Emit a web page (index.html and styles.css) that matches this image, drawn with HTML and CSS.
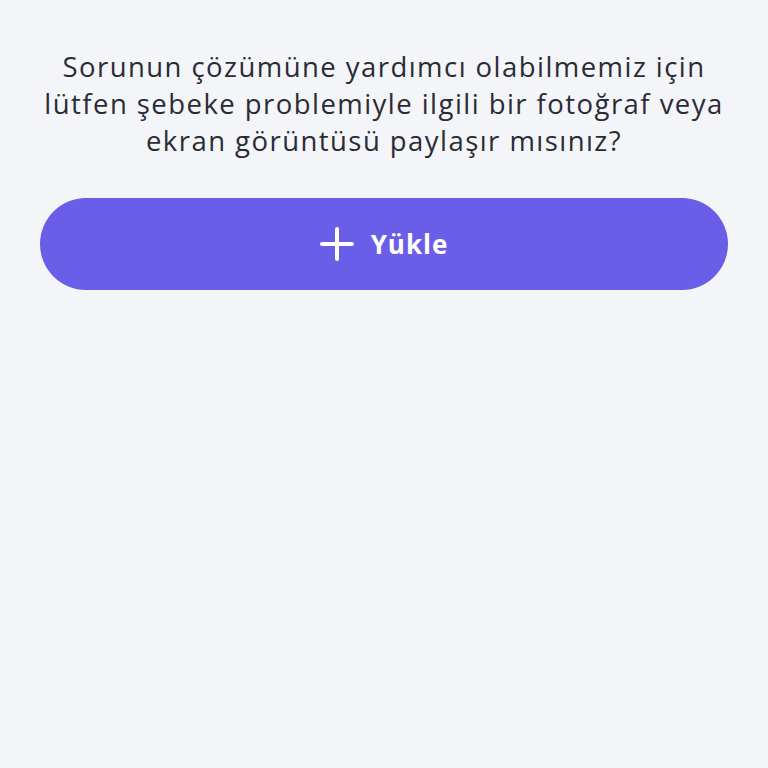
FILE: index.html
```html
<!DOCTYPE html>
<html lang="tr">
<head>
    <meta charset="UTF-8">
    <meta name="viewport" content="width=device-width, initial-scale=1.0">
    <title>Fotoğraf Yükle</title>
    <link rel="stylesheet" href="styles.css">
</head>
<body>
    <div class="upload-container">
        <p class="question">Sorunun çözümüne yardımcı olabilmemiz için lütfen şebeke problemiyle ilgili bir fotoğraf veya ekran görüntüsü paylaşır mısınız?</p>

        <button class="upload-button">
            <svg class="plus-icon" width="34" height="34" viewBox="0 0 34 34">
                <path d="M17 2 V32 M2 17 H32" stroke="#fff" stroke-width="4" stroke-linecap="round" fill="none"/>
            </svg>
            <span>Yükle</span>
        </button>
    </div>
</body>
</html>
```

FILE: styles.css
```css
/* Page */
body {
    margin: 0;
    padding: 0;
    background-color: #f3f5f9;
    font-family: 'Open Sans', sans-serif;
    color: #2b2b36;
    height: 100vh;
}

.upload-container {
    padding: 48px 40px 0;
}

.question {
    margin: 0 -8px;
    font-size: 27.5px;
    line-height: 37px;
    text-align: center;
    letter-spacing: 1.45px;
}

/* Upload button */
.upload-button {
    margin-top: 39px;
    width: 100%;
    height: 92px;
    border: none;
    border-radius: 46px;
    background-color: #6a5de8;
    color: #fff;
    font-family: 'Open Sans', sans-serif;
    font-size: 26px;
    font-weight: bold;
    letter-spacing: 1px;
    display: flex;
    align-items: center;
    justify-content: center;
    gap: 17px;
    cursor: pointer;
}

.plus-icon {
    display: block;
}
```
